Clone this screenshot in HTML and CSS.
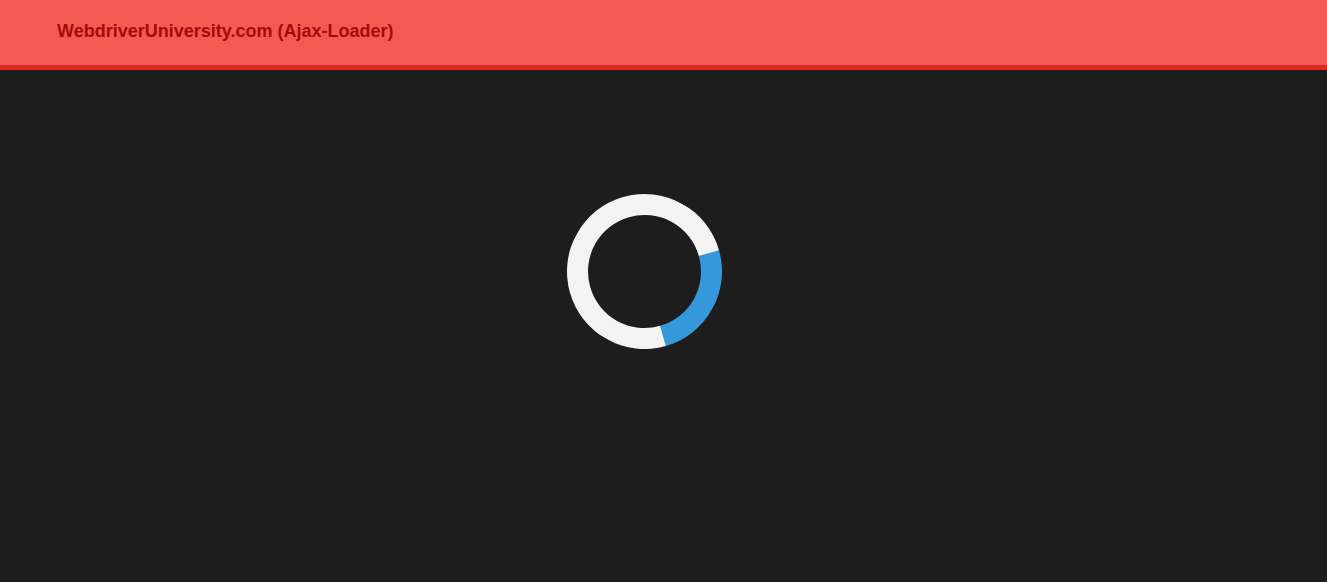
FILE: index.html
```html
<!DOCTYPE html>
<html>
<head>
<meta charset="utf-8">
<title>Ajax-Loader</title>
<link rel="stylesheet" href="styles.css">
</head>
<body>
<header class="navbar">
  <a class="brand" href="#">WebdriverUniversity.com (Ajax-Loader)</a>
</header>
<main class="content">
  <div class="loader"></div>
</main>
</body>
</html>
```

FILE: styles.css
```css
html, body {
  margin: 0;
  padding: 0;
  height: 100%;
}
body {
  background: #1d1d1d;
  font-family: "Liberation Sans", Arial, sans-serif;
  overflow: hidden;
}
.navbar {
  box-sizing: border-box;
  height: 70px;
  background: #f45a51;
  border-bottom: 5px solid #e4281f;
  padding: 21px 0 0 57px;
}
.brand {
  display: block;
  font-size: 18px;
  line-height: 20px;
  font-weight: bold;
  color: #a50b0b;
  text-decoration: none;
}
.content {
  padding: 124px 0 0 567px;
}
.loader {
  box-sizing: border-box;
  width: 155px;
  height: 155px;
  border-radius: 50%;
  border: 21px solid #f3f3f3;
  border-top-color: #3498db;
  transform: rotate(119deg);
}
```
